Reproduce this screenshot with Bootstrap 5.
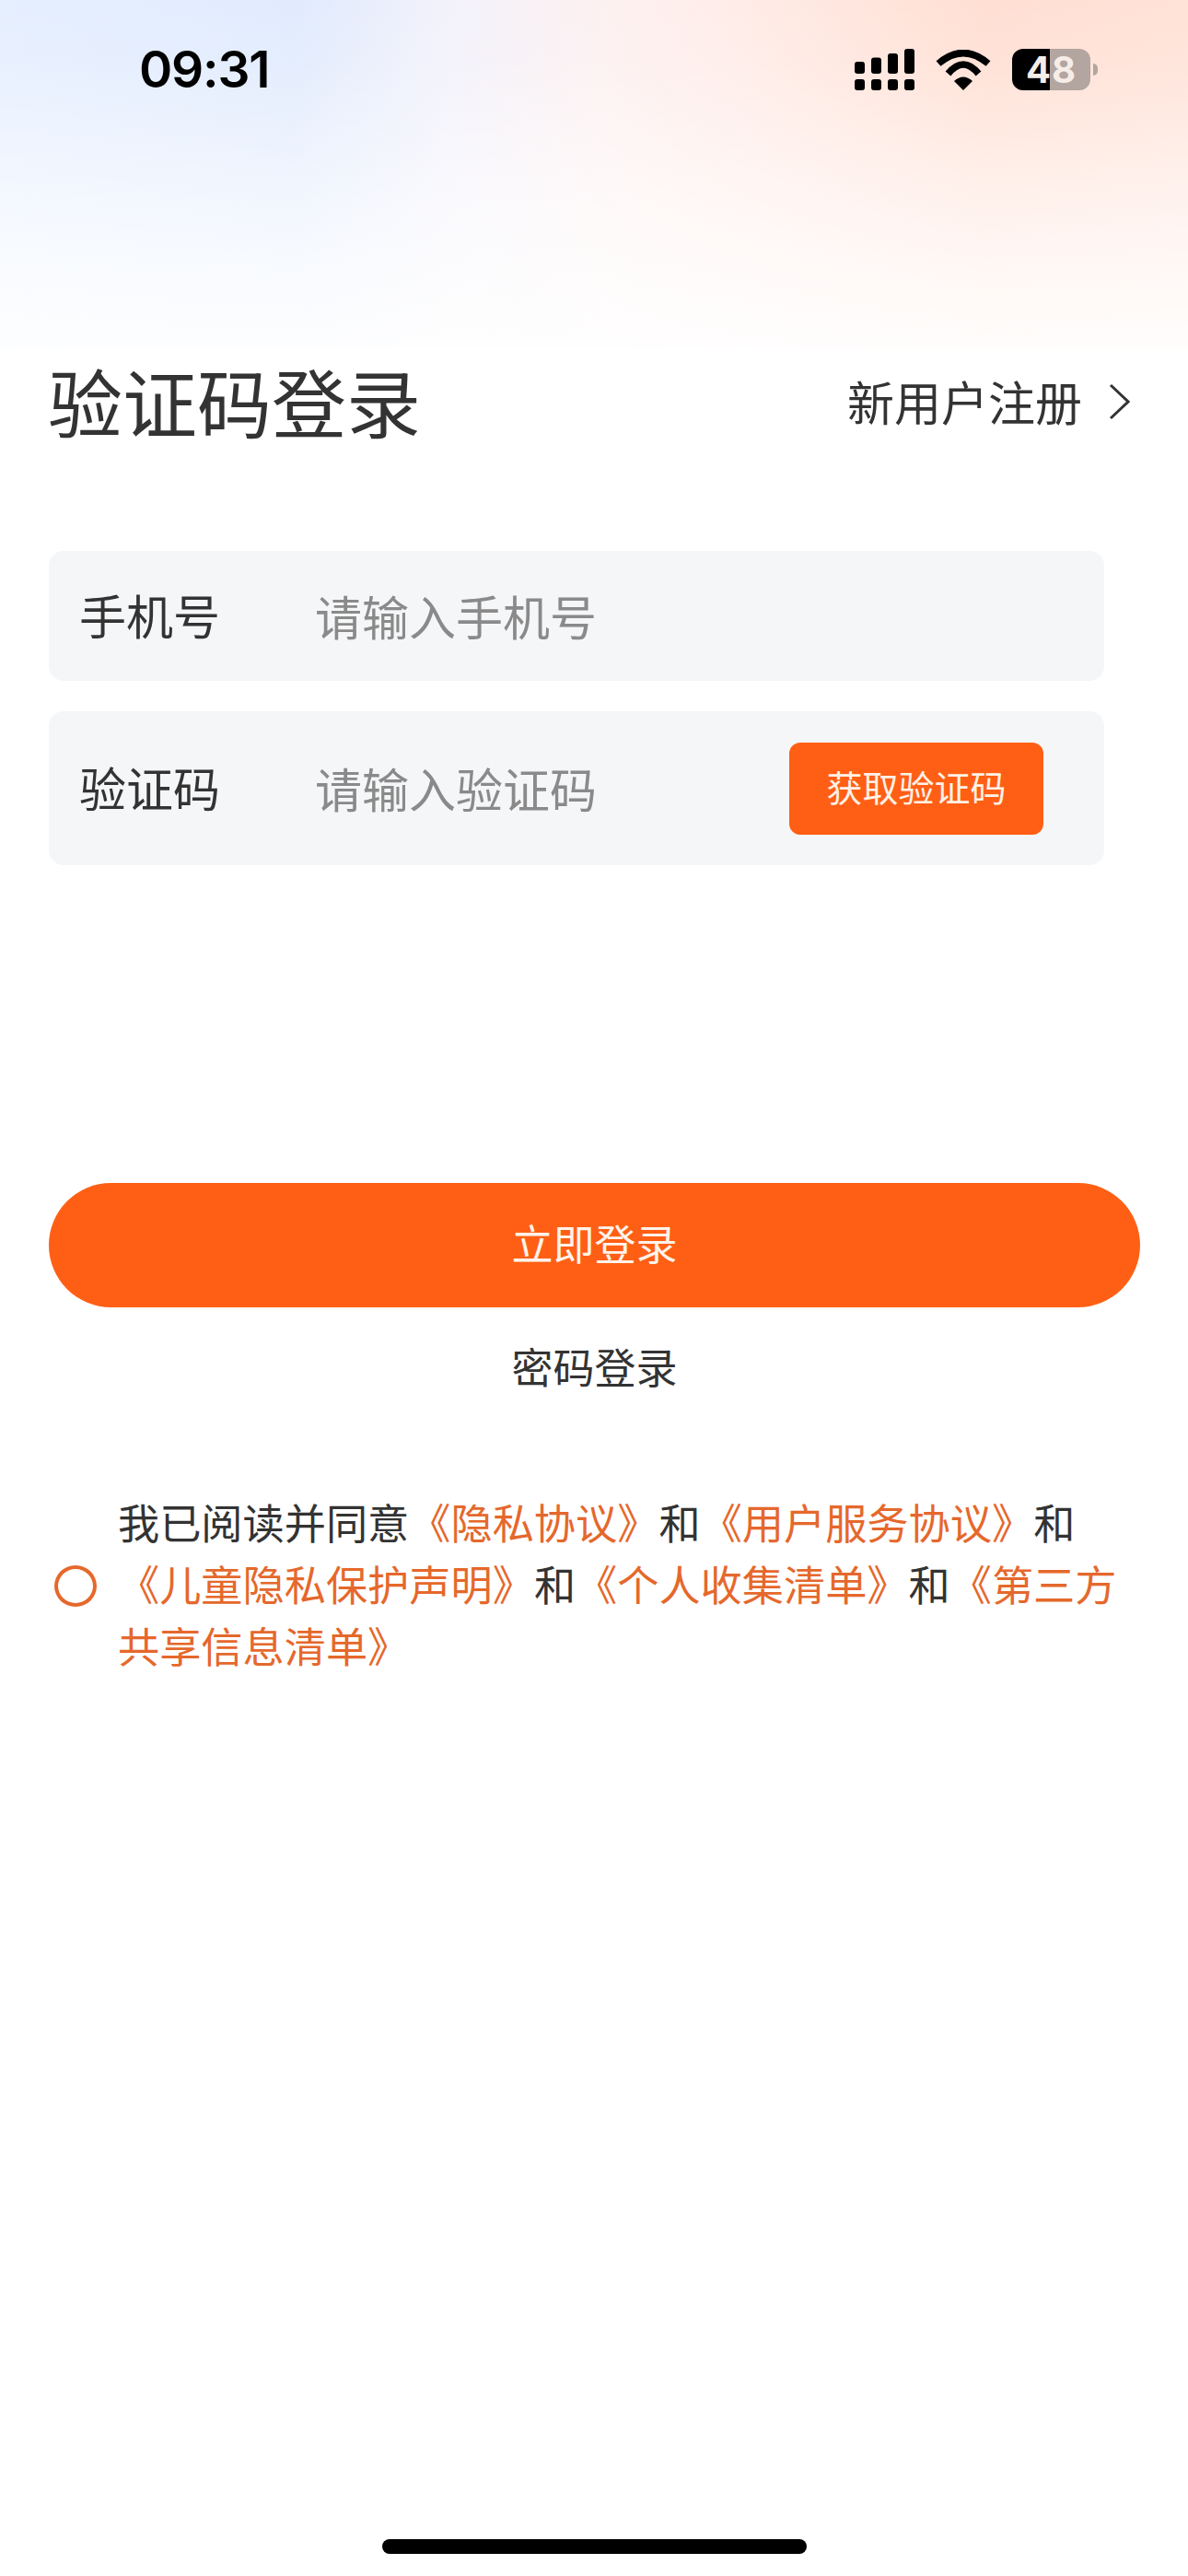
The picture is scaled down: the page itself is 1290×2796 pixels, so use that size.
<!DOCTYPE html>
<html lang="zh-CN">
<head>
  <meta charset="UTF-8"/>
  <meta name="viewport" content="width=device-width, initial-scale=1.0"/>
  <title>验证码登录</title>
  <link href="https://cdn.jsdelivr.net/npm/bootstrap@5.3.0/dist/css/bootstrap.min.css" rel="stylesheet"/>
  <style>
    body {
      background: #fff;
      color: #333;
      font-family: "Noto Sans CJK SC", "Liberation Sans", sans-serif;
    }
    .page { width: 1290px; min-height: 2796px; position: relative; }

    .hero {
      height: 378px;
      padding: 53px 98px 0 151px;
      background:
        linear-gradient(to bottom, rgba(255,255,255,0) 0, rgba(255,255,255,.1) 67px, rgba(255,255,255,.52) 200px, rgba(255,255,255,.78) 300px, rgba(255,255,255,.93) 378px),
        linear-gradient(to right, #e6efff 0, #e1ebfd 25%, #f3f2fb 38%, #fdf1f1 51%, #ffebe6 64%, #ffdfd3 83%, #ffe2d8 100%);
    }
    .status-time { font: 600 55px/45px Inter, "Liberation Sans", sans-serif; color: #000; letter-spacing: -1.2px; }
    .status-icons { gap: 23px; }
    .batt {
      width: 85px; height: 45px;
      border-radius: 12px;
      background: linear-gradient(to right, #000 48%, #b3a5a0 48%);
      color: #f6ece8;
      font: 700 40px/45px Inter, "Liberation Sans", sans-serif;
      text-align: center;
      letter-spacing: 1px;
    }
    .batt-nub { width: 5px; height: 13px; margin-left: -20px; border-radius: 0 6px 6px 0; background: #b3a5a0; }

    .title-row { height: 110px; padding: 0 63px 0 52px; }
    .title-text { font-size: 81px; line-height: 1; font-weight: 400; color: #333; margin: 0; }
    .reg-link { font-size: 51px; line-height: 1; color: #333; text-decoration: none; gap: 29px; padding-top: 5px; }

    .form-wrap { width: 1146px; margin: 110px 0 0 53px; gap: 33px; }
    .field { background: #f5f6f8; border-radius: 16px; padding-left: 33px; }
    .field-phone { height: 141px; }
    .field-code { height: 167px; padding-right: 66px; }
    .field-label { width: 256px; flex: none; font-size: 51px; line-height: 1; color: #333; padding-bottom: 3px; }
    .field .form-control {
      padding: 0; border: 0; border-radius: 0; background: transparent; box-shadow: none;
      font-size: 51px; line-height: 1.2; color: #333;
    }
    .field .form-control::placeholder { color: #8a8a8a; opacity: 1; }
    .btn-code {
      width: 276px; height: 100px; flex: none; padding: 0 0 5px;
      border: 0; border-radius: 12px;
      background: #ff5f15; color: #fff1e6;
      font-size: 39px;
    }
    .btn-login {
      display: block; width: 1185px; height: 135px;
      margin: 345px 0 0 53px; padding: 0 0 5px;
      border: 0; border-radius: 68px;
      background: #ff5f15; color: #fff3ea;
      font-size: 45px;
    }
    .pwd-link { display: block; width: 1185px; margin: 34px 0 0 53px; font-size: 45px; line-height: 60px; color: #333; text-align: center; text-decoration: none; }

    .agree { margin: 105px 0 0 59px; gap: 23px; }
    .agree-radio { width: 46px; height: 45px; flex: none; margin-top: 6px; border: 4px solid #e5682c; border-radius: 50%; }
    .agree-text { width: 1100px; font-size: 45.2px; line-height: 67px; color: #333; }
    .agree-text a { color: #e5682c; text-decoration: none; }

    .home-bar { position: absolute; left: 415px; top: 2756px; width: 461px; height: 16px; border-radius: 8px; background: #000; }
  </style>
</head>
<body>
  <div class="page">
    <div class="hero">
      <div class="d-flex justify-content-between align-items-center">
        <div class="status-time">09:31</div>
        <div class="d-flex align-items-center status-icons">
          <svg width="65" height="45" viewBox="0 0 65 45" fill="#000">
            <rect x="0" y="14" width="11" height="13" rx="3"/><rect x="18" y="9.5" width="11" height="17.5" rx="3"/><rect x="36" y="5" width="11" height="22" rx="3"/><rect x="54" y="0" width="11" height="27" rx="3"/>
            <rect x="0" y="33" width="11" height="12" rx="3"/><rect x="18" y="33" width="11" height="12" rx="3"/><rect x="36" y="33" width="11" height="12" rx="3"/><rect x="54" y="33" width="11" height="12" rx="3"/>
          </svg>
          <svg width="60" height="44" viewBox="0 0 60 44">
            <path d="M3 15Q30 -8 57 15" fill="none" stroke="#000" stroke-width="7.5"/>
            <path d="M13.5 26Q30 6 46.5 26" fill="none" stroke="#000" stroke-width="7.5"/>
            <path d="M20 34Q30 25 40 34L30 44Z" fill="#000"/>
          </svg>
          <div class="batt">48</div>
          <div class="batt-nub"></div>
        </div>
      </div>
    </div>

    <div class="d-flex justify-content-between align-items-center title-row">
      <h1 class="title-text">验证码登录</h1>
      <a href="#" class="d-flex align-items-center reg-link">新用户注册
        <svg width="23" height="40" viewBox="0 0 23 40"><path d="M2 2L21 20L2 38" fill="none" stroke="#333" stroke-width="3"/></svg>
      </a>
    </div>

    <div class="d-flex flex-column form-wrap">
      <div class="d-flex align-items-center field field-phone">
        <label class="field-label" for="phone">手机号</label>
        <input id="phone" type="text" class="form-control" placeholder="请输入手机号"/>
      </div>
      <div class="d-flex align-items-center field field-code">
        <label class="field-label" for="code">验证码</label>
        <input id="code" type="text" class="form-control" placeholder="请输入验证码"/>
        <button type="button" class="btn btn-code">获取验证码</button>
      </div>
    </div>

    <button type="button" class="btn btn-login">立即登录</button>
    <a href="#" class="pwd-link">密码登录</a>

    <div class="d-flex align-items-center agree">
      <div class="agree-radio"></div>
      <div class="agree-text">我已阅读并同意<a href="#">《隐私协议》</a>和<a href="#">《用户服务协议》</a>和<a href="#">《儿童隐私保护声明》</a>和<a href="#">《个人收集清单》</a>和<a href="#">《第三方</a><a href="#">共享信息清单》</a></div>
    </div>

    <div class="home-bar"></div>
  </div>
  <script src="https://cdn.jsdelivr.net/npm/bootstrap@5.3.0/dist/js/bootstrap.bundle.min.js"></script>
</body>
</html>
